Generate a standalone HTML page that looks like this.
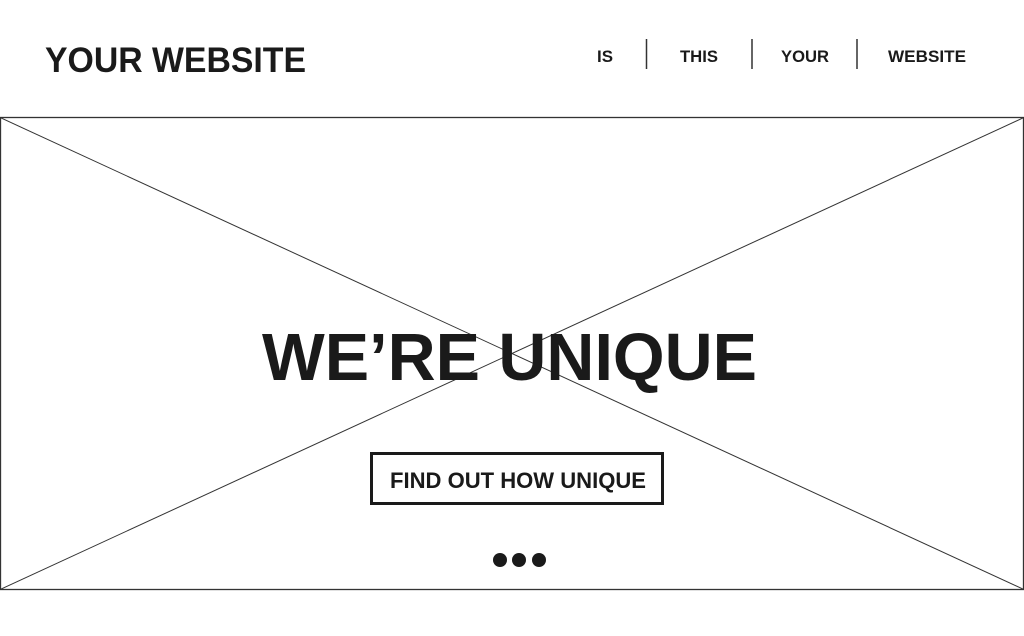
<!DOCTYPE html>
<html><head><meta charset="utf-8"><style>
html,body{margin:0;padding:0;background:#fff;width:1024px;height:636px;overflow:hidden}
text{font-family:"Liberation Sans",sans-serif;font-weight:bold;fill:#1a1a1a}
</style></head><body>
<svg width="1024" height="636" viewBox="0 0 1024 636" xmlns="http://www.w3.org/2000/svg">
<text x="45" y="72" font-size="35" textLength="261" lengthAdjust="spacingAndGlyphs">YOUR WEBSITE</text>
<text x="597" y="62" font-size="17" textLength="16" lengthAdjust="spacingAndGlyphs">IS</text>
<text x="680" y="62" font-size="17" textLength="38" lengthAdjust="spacingAndGlyphs">THIS</text>
<text x="781" y="62" font-size="17" textLength="48" lengthAdjust="spacingAndGlyphs">YOUR</text>
<text x="888" y="62" font-size="17" textLength="78" lengthAdjust="spacingAndGlyphs">WEBSITE</text>
<g stroke="#333" stroke-width="1.5">
<line x1="646.5" y1="39" x2="646.5" y2="69"/>
<line x1="752" y1="39" x2="752" y2="69"/>
<line x1="857" y1="39" x2="857" y2="69"/>
</g>
<rect x="0.5" y="117.5" width="1023" height="472" fill="none" stroke="#333" stroke-width="1.3"/>
<line x1="0" y1="117.5" x2="1024" y2="589.5" stroke="#333" stroke-width="1"/>
<line x1="1024" y1="117.5" x2="0" y2="589.5" stroke="#333" stroke-width="1"/>
<text x="262" y="380" font-size="67" textLength="495" lengthAdjust="spacingAndGlyphs">WE’RE UNIQUE</text>
<rect x="371.5" y="453.5" width="291" height="50" fill="#fff" stroke="#1a1a1a" stroke-width="3"/>
<text x="390" y="488" font-size="22" textLength="256" lengthAdjust="spacingAndGlyphs">FIND OUT HOW UNIQUE</text>
<circle cx="500" cy="560" r="7" fill="#1a1a1a"/>
<circle cx="519" cy="560" r="7" fill="#1a1a1a"/>
<circle cx="539" cy="560" r="7" fill="#1a1a1a"/>
</svg>
</body></html>
